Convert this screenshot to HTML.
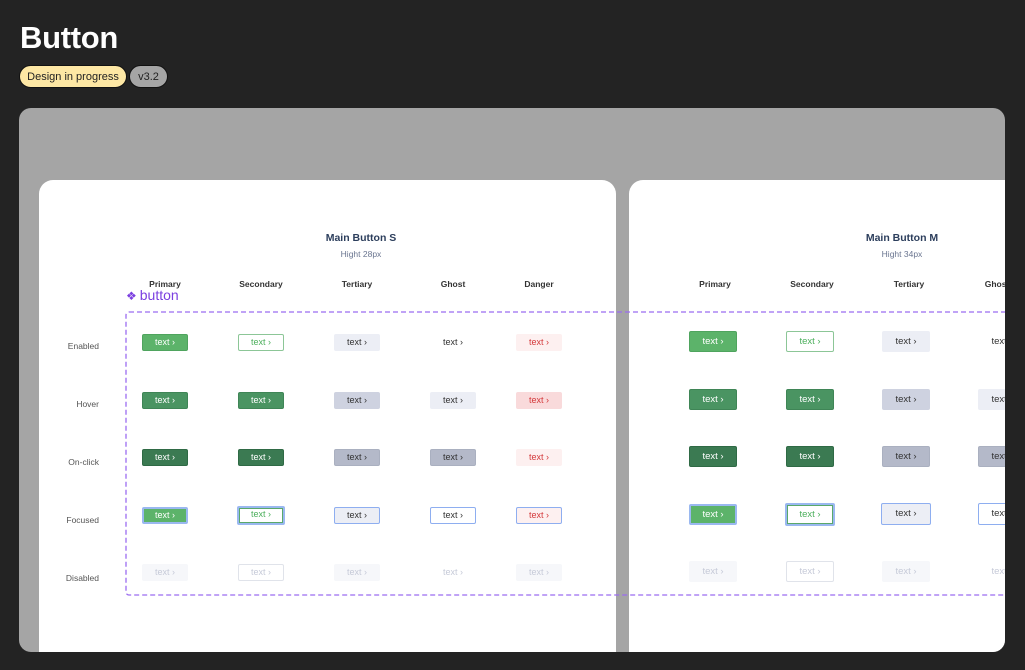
<!DOCTYPE html>
<html><head><meta charset="utf-8"><style>
*{margin:0;padding:0;box-sizing:border-box}
body{width:1025px;height:670px;background:#232323;font-family:"Liberation Sans",sans-serif;position:relative;overflow:hidden}
h1{position:absolute;left:20px;top:20px;color:#fff;font-size:31px;font-weight:bold;letter-spacing:-0.3px}
.tag{position:absolute;top:65px;height:23px;border-radius:12px;border:1px solid #111;font-size:11px;line-height:22px;color:#222;text-align:center}
.panel{position:absolute;left:19px;top:108px;width:986px;height:544px;background:#a5a5a5;border-radius:12px;overflow:hidden}
.card{position:absolute;top:72px;width:577px;height:520px;background:#fff;border-radius:14px}
.t{position:absolute;font-size:10.5px;font-weight:bold;color:#2c3e5c;text-align:center;width:200px}
.st{position:absolute;font-size:8.5px;color:#6a7590;text-align:center;width:200px}
.ch{position:absolute;font-size:8.5px;font-weight:bold;color:#333;text-align:center;width:100px}
.rl{position:absolute;font-size:8.5px;color:#555;text-align:right;width:80px;left:0}
.b{position:absolute;width:46px;height:17px;border-radius:2px;font-size:9px;line-height:15px;text-align:center;border:1px solid transparent}
.m{width:48px;height:21px;line-height:19px;font-size:9.5px}
.b::after{content:" \203A"}
.pe{background:#5cb36a;border-color:#4fa45e;color:#fff}
.ph{background:#4a9462;border-color:#3f8556;color:#fff}
.pc{background:#3b7a52;border-color:#2f6a45;color:#fff}
.pf{background:#5cb36a;border:2px solid #9ab8f0;color:#fff;line-height:13px}
.se{background:#fff;border-color:#8cc697;color:#4caf5c}
.sf{background:#fff;border:2px solid #9ab8f0;color:#4caf5c;line-height:13px;box-shadow:inset 0 0 0 1px #5aa86a}
.te{background:#eceef5;color:#333}
.th{background:#ced2e0;color:#333}
.tc{background:#b4b9c9;border-color:#aab0c0;color:#333}
.tf{background:#eceef5;border:1.5px solid #8eaef0;color:#333}
.ge{background:transparent;color:#333}
.gf{background:#fff;border:1.5px solid #8eaef0;color:#333}
.de{background:#fdf0f0;color:#d4393b}
.dh{background:#f9dadb;color:#d4393b}
.df{background:#fdf0f0;border:1.5px solid #8eaef0;color:#d4393b}
.di{background:#f6f7fa;color:#c6cad8}
.dis{background:#fff;border-color:#e0e3ea;color:#c6cad8}
.dg{color:#c6cad8}
</style></head><body>
<h1>Button</h1>
<div class="tag" style="left:19px;width:108px;background:#fde7a4">Design in progress</div>
<div class="tag" style="left:129px;width:39px;background:#a5a5a5">v3.2</div>
<div class="panel">
<div class="card" style="left:20px"></div>
<div class="card" style="left:610px;width:600px"></div>
<svg style="position:absolute;left:106px;top:203px" width="900" height="286"><rect x="1" y="1" width="1000" height="283" rx="3" fill="none" stroke="#9b6cf0" stroke-width="1.3" stroke-dasharray="5 3"/></svg>
<div class="t" style="left:242px;top:124px">Main Button S</div>
<div class="st" style="left:242px;top:141px">Hight 28px</div>
<div class="t" style="left:783px;top:124px">Main Button M</div>
<div class="st" style="left:783px;top:141px">Hight 34px</div>
<div class="ch" style="left:96px;top:171px">Primary</div>
<div class="ch" style="left:192px;top:171px">Secondary</div>
<div class="ch" style="left:288px;top:171px">Tertiary</div>
<div class="ch" style="left:384px;top:171px">Ghost</div>
<div class="ch" style="left:470px;top:171px">Danger</div>
<div class="ch" style="left:646px;top:171px">Primary</div>
<div class="ch" style="left:743px;top:171px">Secondary</div>
<div class="ch" style="left:840px;top:171px">Tertiary</div>
<div class="ch" style="left:928px;top:171px">Ghost</div>
<div style="position:absolute;left:107px;top:179px;color:#7b3fe0;font-size:14px;line-height:16px"><span style="font-size:12px;margin-right:3px">&#10070;</span>button</div>
<div class="rl" style="top:233px">Enabled</div>
<div class="rl" style="top:291px">Hover</div>
<div class="rl" style="top:349px">On-click</div>
<div class="rl" style="top:407px">Focused</div>
<div class="rl" style="top:465px">Disabled</div>
<div class="b pe" style="left:123px;top:226px">text</div>
<div class="b se" style="left:219px;top:226px">text</div>
<div class="b te" style="left:315px;top:226px">text</div>
<div class="b ge" style="left:411px;top:226px">text</div>
<div class="b de" style="left:497px;top:226px">text</div>
<div class="b ph" style="left:123px;top:284px">text</div>
<div class="b ph" style="left:219px;top:284px">text</div>
<div class="b th" style="left:315px;top:284px">text</div>
<div class="b te" style="left:411px;top:284px">text</div>
<div class="b dh" style="left:497px;top:284px">text</div>
<div class="b pc" style="left:123px;top:341px">text</div>
<div class="b pc" style="left:219px;top:341px">text</div>
<div class="b tc" style="left:315px;top:341px">text</div>
<div class="b tc" style="left:411px;top:341px">text</div>
<div class="b de" style="left:497px;top:341px">text</div>
<div class="b pf" style="left:123px;top:399px">text</div>
<div class="b sf" style="left:218px;top:398px;width:48px;height:19px">text</div>
<div class="b tf" style="left:315px;top:399px">text</div>
<div class="b gf" style="left:411px;top:399px">text</div>
<div class="b df" style="left:497px;top:399px">text</div>
<div class="b di" style="left:123px;top:456px">text</div>
<div class="b dis" style="left:219px;top:456px">text</div>
<div class="b di" style="left:315px;top:456px">text</div>
<div class="b dg" style="left:411px;top:456px">text</div>
<div class="b di" style="left:497px;top:456px">text</div>
<div class="b m pe" style="left:670px;top:223px">text</div>
<div class="b m se" style="left:767px;top:223px">text</div>
<div class="b m te" style="left:863px;top:223px">text</div>
<div class="b m ge" style="left:959px;top:223px">text</div>
<div class="b m ph" style="left:670px;top:281px">text</div>
<div class="b m ph" style="left:767px;top:281px">text</div>
<div class="b m th" style="left:863px;top:281px">text</div>
<div class="b m te" style="left:959px;top:281px">text</div>
<div class="b m pc" style="left:670px;top:338px">text</div>
<div class="b m pc" style="left:767px;top:338px">text</div>
<div class="b m tc" style="left:863px;top:338px">text</div>
<div class="b m tc" style="left:959px;top:338px">text</div>
<div class="b m pf" style="left:670px;top:396px;line-height:17px">text</div>
<div class="b m sf" style="left:766px;top:395px;width:50px;height:23px;line-height:19px">text</div>
<div class="b m tf" style="left:862px;top:395px;width:50px;height:22px">text</div>
<div class="b m gf" style="left:959px;top:395px;height:22px">text</div>
<div class="b m di" style="left:670px;top:453px">text</div>
<div class="b m dis" style="left:767px;top:453px">text</div>
<div class="b m di" style="left:863px;top:453px">text</div>
<div class="b m dg" style="left:959px;top:453px">text</div>
</div>
</body></html>
